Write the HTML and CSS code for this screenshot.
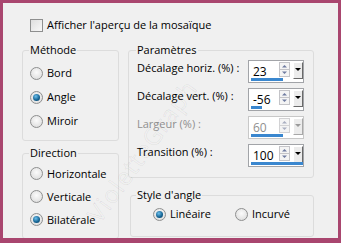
FILE: index.html
```html
<!DOCTYPE html>
<html>
    <head>
        <title>Mosaïque - Paramètres</title>
        <meta charset="UTF-8">
        <link rel="stylesheet" href="styles.css">
    </head>
    <body>
        <div class="dialog">
            <div class="check-row">
                <span class="checkbox"></span>
                <span>Afficher l'aperçu de la mosaïque</span>
            </div>

            <div class="columns">
                <div class="col-left">
                    <fieldset class="group methode">
                        <legend>Méthode</legend>
                        <div class="opt"><span class="radio"></span>Bord</div>
                        <div class="opt"><span class="radio checked"></span>Angle</div>
                        <div class="opt"><span class="radio"></span>Miroir</div>
                    </fieldset>

                    <fieldset class="group direction">
                        <legend>Direction</legend>
                        <div class="opt"><span class="radio"></span>Horizontale</div>
                        <div class="opt"><span class="radio"></span>Verticale</div>
                        <div class="opt"><span class="radio checked"></span>Bilatérale</div>
                    </fieldset>
                </div>

                <div class="col-right">
                    <fieldset class="group params">
                        <legend>Paramètres</legend>
                        <div class="param">
                            <span class="param-label">Décalage horiz. (%) :</span>
                            <div class="spin">
                                <span class="spin-value">23</span>
                                <svg class="spin-arrows" width="11" height="15" viewBox="0 0 11 15">
                                    <rect x="0.5" y="0.5" width="10" height="14" fill="#f4f4f4" stroke="#c4c4c8"/>
                                    <line x1="1" y1="7.5" x2="10" y2="7.5" stroke="#c4c4c8"/>
                                    <path d="M3 5.5 L5.5 3 L8 5.5 Z" fill="#6f7ba0"/>
                                    <path d="M3 9.5 L5.5 12 L8 9.5 Z" fill="#6f7ba0"/>
                                </svg>
                                <span class="spin-drop"></span>
                                <span class="spin-bar" style="width:32px"></span>
                            </div>
                        </div>
                        <div class="param">
                            <span class="param-label">Décalage vert. (%) :</span>
                            <div class="spin">
                                <span class="spin-value">-56</span>
                                <svg class="spin-arrows" width="11" height="15" viewBox="0 0 11 15">
                                    <rect x="0.5" y="0.5" width="10" height="14" fill="#f4f4f4" stroke="#c4c4c8"/>
                                    <line x1="1" y1="7.5" x2="10" y2="7.5" stroke="#c4c4c8"/>
                                    <path d="M3 5.5 L5.5 3 L8 5.5 Z" fill="#6f7ba0"/>
                                    <path d="M3 9.5 L5.5 12 L8 9.5 Z" fill="#6f7ba0"/>
                                </svg>
                                <span class="spin-drop"></span>
                                <span class="spin-bar" style="width:11px"></span>
                            </div>
                        </div>
                        <div class="param disabled">
                            <span class="param-label">Largeur (%) :</span>
                            <div class="spin">
                                <span class="spin-value">60</span>
                                <svg class="spin-arrows" width="11" height="15" viewBox="0 0 11 15">
                                    <rect x="0.5" y="0.5" width="10" height="14" fill="#f4f4f4" stroke="#d2d2d4"/>
                                    <line x1="1" y1="7.5" x2="10" y2="7.5" stroke="#d2d2d4"/>
                                    <path d="M3 5.5 L5.5 3 L8 5.5 Z" fill="#a8aec0"/>
                                    <path d="M3 9.5 L5.5 12 L8 9.5 Z" fill="#a8aec0"/>
                                </svg>
                                <span class="spin-drop"></span>
                                <span class="spin-bar" style="width:32px"></span>
                            </div>
                        </div>
                        <div class="param">
                            <span class="param-label">Transition (%) :</span>
                            <div class="spin">
                                <span class="spin-value">100</span>
                                <svg class="spin-arrows" width="11" height="15" viewBox="0 0 11 15">
                                    <rect x="0.5" y="0.5" width="10" height="14" fill="#f4f4f4" stroke="#c4c4c8"/>
                                    <line x1="1" y1="7.5" x2="10" y2="7.5" stroke="#c4c4c8"/>
                                    <path d="M3 5.5 L5.5 3 L8 5.5 Z" fill="#6f7ba0"/>
                                    <path d="M3 9.5 L5.5 12 L8 9.5 Z" fill="#6f7ba0"/>
                                </svg>
                                <span class="spin-drop"></span>
                                <span class="spin-bar" style="width:52px"></span>
                            </div>
                        </div>
                    </fieldset>

                    <fieldset class="group style">
                        <legend>Style d'angle</legend>
                        <div class="opt-row">
                            <div class="opt"><span class="radio checked"></span>Linéaire</div>
                            <div class="opt"><span class="radio"></span>Incurvé</div>
                        </div>
                    </fieldset>
                </div>
            </div>

            <div class="watermark">VioletteGraph</div>
        </div>
    </body>
</html>
```

FILE: styles.css
```css
body
{
    margin: 0;
    font-family: "Open Sans", "Liberation Sans", sans-serif;
    font-size: 11px;
    line-height: 16px;
    color: #000;
}
.dialog
{
    position: relative;
    width: 341px;
    height: 243px;
    box-sizing: border-box;
    border: 3px solid #a9466f;
    border-bottom-width: 5px;
    background-color: #f0f0f0;
    overflow: hidden;
}
.check-row
{
    display: flex;
    align-items: center;
    padding: 14px 0 0 27px;
    height: 16px;
}
.checkbox
{
    width: 11px;
    height: 11px;
    border: 1px solid #8e8f8f;
    background: linear-gradient(135deg, #dedede, #f8f8f8);
    margin-right: 4px;
}
.columns
{
    display: flex;
    gap: 9px;
    margin: 9px 0 0 19px;
}
.col-left
{
    width: 97px;
    display: flex;
    flex-direction: column;
    gap: 4px;
}
.col-right
{
    width: 186px;
    display: flex;
    flex-direction: column;
    gap: 9px;
}
.group
{
    margin: 0;
    border: 1px solid #dcdcdc;
    border-radius: 3px;
    padding: 0 0 0 7px;
    min-width: 0;
}
.group legend
{
    padding: 0 1px;
    margin-left: -1px;
    line-height: 16px;
}
.opt
{
    display: flex;
    align-items: center;
    white-space: nowrap;
}
.methode
{
    padding-top: 3px;
    padding-bottom: 7px;
}
.methode .opt
{
    height: 24px;
}
.direction
{
    padding-top: 1px;
    padding-bottom: 7px;
}
.direction .opt
{
    height: 23px;
}
.radio
{
    position: relative;
    width: 11px;
    height: 11px;
    border: 1px solid #8e8f8f;
    border-radius: 50%;
    background: radial-gradient(circle at 50% 40%, #fbfbfb, #d8d8d8);
    margin-right: 4px;
    flex: none;
}
.radio.checked::after
{
    content: "";
    position: absolute;
    left: 2px;
    top: 2px;
    width: 7px;
    height: 7px;
    border-radius: 50%;
    background: radial-gradient(circle at 40% 35%, #6cc0ee, #12608f 60%, #0a3a5e);
}
.params
{
    padding: 2px 9px 10px 8px;
}
.param
{
    display: flex;
    justify-content: space-between;
    align-items: flex-start;
    height: 23px;
    margin-bottom: 5px;
}
.param:last-child
{
    margin-bottom: 0;
}
.param-label
{
    line-height: 16px;
    white-space: nowrap;
}
.spin
{
    position: relative;
    display: flex;
    align-items: flex-start;
    width: 54px;
    height: 21px;
    border: 1px solid #a2a4a8;
    background-color: #fff;
}
.spin-value
{
    flex: 1;
    padding: 3px 0 0 4px;
    line-height: 16px;
    font-size: 12px;
}
.spin-arrows
{
    margin: 1px 3px 0 0;
}
.spin-drop
{
    position: relative;
    width: 8px;
    height: 15px;
    margin: 1px 0 0 0;
    border-top: 1px solid #fff;
    border-left: 1px solid #fff;
    border-right: 1px solid #6a6a6a;
    border-bottom: 1px solid #6a6a6a;
    background-color: #ececec;
}
.spin-drop::after
{
    content: "";
    position: absolute;
    left: 1px;
    top: 5px;
    border-left: 3px solid transparent;
    border-right: 3px solid transparent;
    border-top: 3px solid #000;
}
.spin-bar
{
    position: absolute;
    left: 2px;
    bottom: 1px;
    height: 3px;
    background-color: #3a87cf;
}
.disabled .param-label,
.disabled .spin-value
{
    color: #8f8f8f;
}
.disabled .spin
{
    border-color: #c8c8c8;
}
.disabled .spin-drop
{
    border-right-color: #a8a8a8;
    border-bottom-color: #a8a8a8;
}
.disabled .spin-drop::after
{
    border-top-color: #9a9a9a;
}
.style
{
    margin-left: 2px;
    padding: 0 0 11px 6px;
}
.opt-row
{
    display: flex;
    gap: 24px;
    height: 22px;
    padding-left: 16px;
}
.watermark
{
    position: absolute;
    left: 55px;
    top: 140px;
    transform: rotate(-54deg);
    font-size: 24px;
    letter-spacing: 1px;
    color: transparent;
    -webkit-text-stroke: 0.6px rgba(0, 0, 0, 0.09);
    pointer-events: none;
}
```
